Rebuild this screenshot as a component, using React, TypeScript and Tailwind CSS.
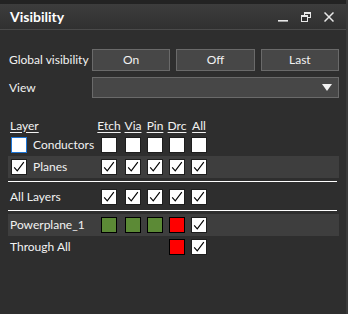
import React from "react";

const COLS = ["Etch", "Via", "Pin", "Drc", "All"];
const OFFS = ["ml-0", "ml-[8px]", "ml-[6px]", "ml-[6px]", "ml-[6px]"];

function Check() {
  return (
    <svg viewBox="0 0 16 16" className="w-[14px] h-[14px]">
      <path d="M2.5 8.5 L6 12.5 L13.5 2.5" stroke="#000" strokeWidth="1.3" fill="none" />
    </svg>
  );
}

type Kind = "off" | "on" | "green" | "red" | "none";

function Box({ kind }: { kind: Kind }) {
  if (kind === "none") return <div className="w-4 h-4" />;
  if (kind === "green") return <div className="w-4 h-4 bg-[#5c8a36] border border-black" />;
  if (kind === "red") return <div className="w-4 h-4 bg-[#ff0000] border border-black" />;
  return (
    <div className="w-4 h-4 bg-white border border-[#1e1e1e] flex items-center justify-center">
      {kind === "on" && <Check />}
    </div>
  );
}

function Cells({ kinds }: { kinds: Kind[] }) {
  return (
    <>
      {kinds.map((k, i) => (
        <div key={i} className={`${OFFS[i]} w-4 flex justify-center`}>
          <Box kind={k} />
        </div>
      ))}
    </>
  );
}

function Row({ label, kinds, hi, lead }: { label: string; kinds: Kind[]; hi?: boolean; lead?: React.ReactNode }) {
  return (
    <div className={`h-[22px] flex items-center ${hi ? "bg-[#3e3e3e]" : ""}`}>
      <div className={`w-[93px] flex items-center gap-[6px] ${lead ? "pl-[3px]" : "pl-[2px]"}`}>
        {lead}
        <span className="whitespace-nowrap">{label}</span>
      </div>
      <Cells kinds={kinds} />
    </div>
  );
}

export default function App() {
  const btn = "h-[22px] bg-[#474747] border border-[#6a6a6a] flex items-center justify-center";
  return (
    <div
      className="w-[348px] h-[314px] bg-[#2e2e2e] flex text-[12px] leading-[16px] text-[#f2f2f2]"
      style={{ fontFamily: 'Lato, "Open Sans", sans-serif' }}
    >
      <div className="flex-1 flex flex-col">
        <div className="h-[4px] bg-[#232323]" />
        <div className="h-[26px] bg-gradient-to-b from-[#3d3d3d] to-[#303030] border-b border-[#4a4a4a] flex items-center pl-[10px] pr-[12px]">
          <span className="text-[14px] font-bold text-white">Visibility</span>
          <div className="ml-auto flex items-center gap-[13px]">
            <svg viewBox="0 0 10 10" className="w-[10px] h-[10px]">
              <rect x="0" y="8" width="10" height="1.6" fill="#e8e8e8" />
            </svg>
            <svg viewBox="0 0 10 10" className="w-[10px] h-[10px]">
              <rect x="3.5" y="0.5" width="6" height="5" fill="none" stroke="#e8e8e8" strokeWidth="1" />
              <rect x="3.5" y="0.5" width="6" height="1.5" fill="#e8e8e8" />
              <rect x="0.5" y="3.5" width="6" height="6" fill="#303030" stroke="#e8e8e8" strokeWidth="1" />
              <rect x="0.5" y="3.5" width="6" height="1.5" fill="#e8e8e8" />
            </svg>
            <svg viewBox="0 0 10 10" className="w-[10px] h-[10px]">
              <path d="M0.5 0.5 L9.5 9.5 M9.5 0.5 L0.5 9.5" stroke="#e8e8e8" strokeWidth="1.5" />
            </svg>
          </div>
        </div>

        <div className="pl-[9px] pt-[19px]">
          <div className="flex items-center">
            <div className="w-[83px] whitespace-nowrap">Global visibility</div>
            <div className="w-[247px] grid grid-cols-3 gap-[6px]">
              <div className={btn}>On</div>
              <div className={btn}>Off</div>
              <div className={btn}>Last</div>
            </div>
          </div>
          <div className="flex items-center mt-[6px]">
            <div className="w-[83px]">View</div>
            <div className="w-[247px] h-[21px] bg-[#474747] border border-[#6a6a6a] flex items-center justify-end pr-[6px]">
              <svg viewBox="0 0 10 8" className="w-[10px] h-[8px]">
                <path d="M0 0 L10 0 L5 7 Z" fill="#f2f2f2" />
              </svg>
            </div>
          </div>
        </div>

        <div className="ml-[8px] w-[331px] mt-[19px]">
          <div className="h-[17px] flex items-center">
            <div className="w-[93px] pl-[2px] underline underline-offset-2">Layer</div>
            {COLS.map((c, i) => (
              <div key={c} className={`${OFFS[i]} w-4 flex justify-center underline underline-offset-2 whitespace-nowrap`}>
                {c}
              </div>
            ))}
          </div>
          <Row
            label="Conductors"
            kinds={["off", "off", "off", "off", "off"]}
            lead={<div className="w-4 h-4 bg-white border-[1.5px] border-[#1c74d4]" />}
          />
          <Row label="Planes" hi kinds={["on", "on", "on", "on", "on"]} lead={<Box kind="on" />} />
          <div className="h-px bg-white mt-[3px] mr-[2px]" />
          <div className="pt-[4px]">
            <Row label="All Layers" kinds={["on", "on", "on", "on", "on"]} />
          </div>
          <div className="h-px bg-white mt-[2px] mr-[2px]" />
          <div className="pt-[3px]">
            <Row label="Powerplane_1" hi kinds={["green", "green", "green", "red", "on"]} />
            <Row label="Through All" kinds={["none", "none", "none", "red", "on"]} />
          </div>
        </div>
      </div>
      <div className="w-[2px] bg-[#3a3a3a]" />
    </div>
  );
}
